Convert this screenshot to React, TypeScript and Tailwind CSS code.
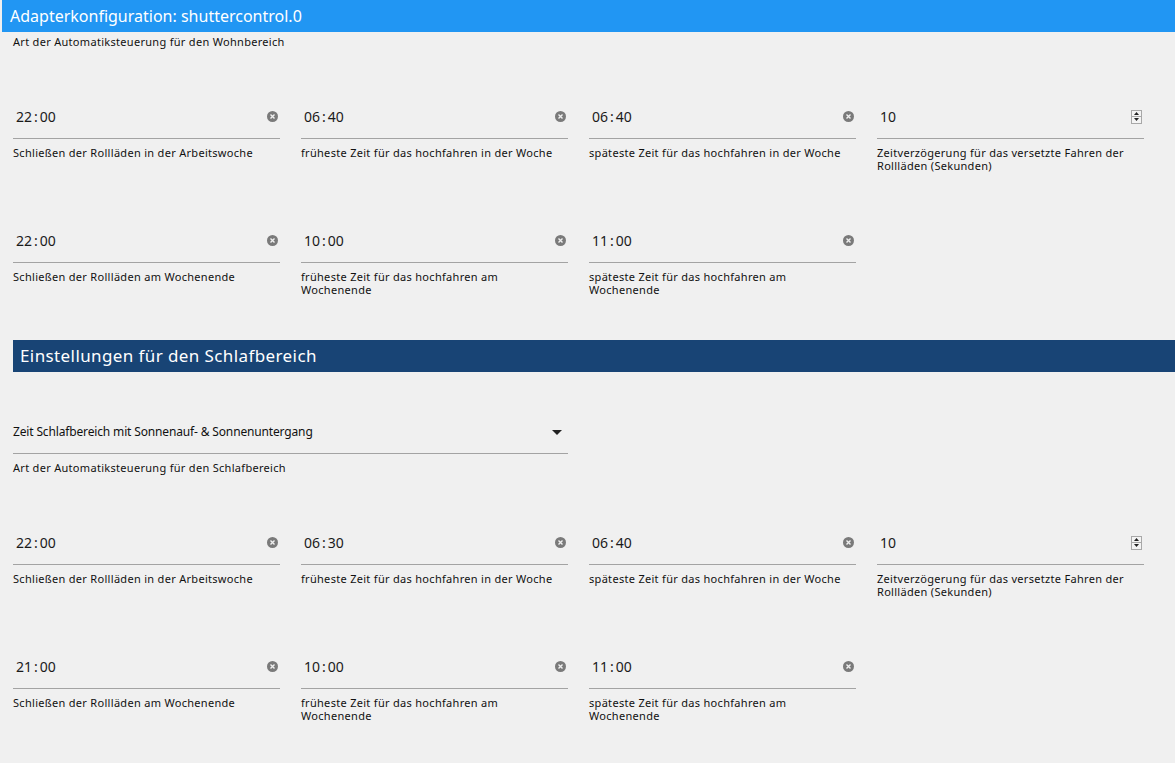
import React from "react";

type Field = { value: string; label: string; kind?: "time" | "number" };

const wohnRows: Field[][] = [
  [
    { value: "22:00", label: "Schließen der Rollläden in der Arbeitswoche" },
    { value: "06:40", label: "früheste Zeit für das hochfahren in der Woche" },
    { value: "06:40", label: "späteste Zeit für das hochfahren in der Woche" },
    { value: "10", kind: "number", label: "Zeitverzögerung für das versetzte Fahren der Rollläden (Sekunden)" },
  ],
  [
    { value: "22:00", label: "Schließen der Rollläden am Wochenende" },
    { value: "10:00", label: "früheste Zeit für das hochfahren am Wochenende" },
    { value: "11:00", label: "späteste Zeit für das hochfahren am Wochenende" },
  ],
];

const schlafRows: Field[][] = [
  [
    { value: "22:00", label: "Schließen der Rollläden in der Arbeitswoche" },
    { value: "06:30", label: "früheste Zeit für das hochfahren in der Woche" },
    { value: "06:40", label: "späteste Zeit für das hochfahren in der Woche" },
    { value: "10", kind: "number", label: "Zeitverzögerung für das versetzte Fahren der Rollläden (Sekunden)" },
  ],
  [
    { value: "21:00", label: "Schließen der Rollläden am Wochenende" },
    { value: "10:00", label: "früheste Zeit für das hochfahren am Wochenende" },
    { value: "11:00", label: "späteste Zeit für das hochfahren am Wochenende" },
  ],
];

function ClearIcon() {
  return (
    <svg width="11" height="11" viewBox="0 0 11 11">
      <circle cx="5.5" cy="5.5" r="5.5" fill="#7a7a7a" />
      <path d="M3.5 3.5 L7.5 7.5 M7.5 3.5 L3.5 7.5" stroke="#f0f0f0" strokeWidth="1.4" />
    </svg>
  );
}

function Spinner() {
  return (
    <div className="flex flex-col w-[11px] h-[14px] border border-[#a8a8a8] bg-[#f4f4f4]">
      <div className="flex-1 flex items-center justify-center border-b border-[#a8a8a8]">
        <svg width="5" height="3" viewBox="0 0 5 3"><path d="M0 3 L2.5 0 L5 3 Z" fill="#222" /></svg>
      </div>
      <div className="flex-1 flex items-center justify-center">
        <svg width="5" height="3" viewBox="0 0 5 3"><path d="M0 0 L2.5 3 L5 0 Z" fill="#222" /></svg>
      </div>
    </div>
  );
}

function TimeValue({ value }: { value: string }) {
  const [h, m] = value.split(":");
  return (
    <span className="flex items-center">
      <span>{h}</span>
      <span className="mx-[2px]">:</span>
      <span>{m}</span>
    </span>
  );
}

function FieldCell({ field }: { field: Field }) {
  return (
    <div className="pr-[21px]">
      <div className="h-[31px] pb-[13px] flex items-center justify-between border-b border-[#a3a3a3] pl-[3px] pr-[2px] text-[14px] text-[#1a1a1a]">
        {field.kind === "number" ? <span>{field.value}</span> : <TimeValue value={field.value} />}
        {field.kind === "number" ? <Spinner /> : <ClearIcon />}
      </div>
      <div className="mt-[7px] text-[11px] leading-[13px] tracking-[0.3px] text-[#111]">{field.label}</div>
    </div>
  );
}

function FieldGrid({ rows }: { rows: Field[][] }) {
  return (
    <div className="flex flex-col gap-[58px] w-[1152px]">
      {rows.map((row, i) => (
        <div key={i} className="grid grid-cols-4 h-[66px]">
          {row.map((f, j) => (
            <FieldCell key={j} field={f} />
          ))}
        </div>
      ))}
    </div>
  );
}

export default function App() {
  return (
    <div
      className="w-[1175px] h-[763px] overflow-hidden bg-[#f0f0f0]"
      style={{ fontFamily: '"Noto Sans", "Open Sans", sans-serif' }}
    >
      {/* Header */}
      <div className="ml-[2px] h-[32px] bg-[#2196f3] flex items-center pl-[8px] text-white text-[16px]">
        Adapterkonfiguration: shuttercontrol.0
      </div>

      <div className="pl-[13px]">
        <div className="mt-[3px] text-[11px] leading-[14px] tracking-[0.3px] text-[#111]">
          Art der Automatiksteuerung für den Wohnbereich
        </div>

        <div className="mt-[59px]">
          <FieldGrid rows={wohnRows} />
        </div>

        {/* Schlafbereich */}
        <div className="mt-[42px] h-[32px] bg-[#184475] flex items-center pl-[7px] text-white text-[17px] tracking-[0.4px]">
          Einstellungen für den Schlafbereich
        </div>

        <div className="mt-[51px] w-[555px]">
          <div className="h-[31px] pb-[12px] flex items-center justify-between border-b border-[#a3a3a3] pr-[6px] text-[12px] tracking-[-0.15px] text-[#111]">
            <span>Zeit Schlafbereich mit Sonnenauf- &amp; Sonnenuntergang</span>
            <svg width="10" height="5" viewBox="0 0 10 5"><path d="M0 0 L10 0 L5 5 Z" fill="#222" /></svg>
          </div>
          <div className="mt-[7px] text-[11px] leading-[13px] tracking-[0.3px] text-[#111]">
            Art der Automatiksteuerung für den Schlafbereich
          </div>
        </div>

        <div className="mt-[60px]">
          <FieldGrid rows={schlafRows} />
        </div>
      </div>
    </div>
  );
}
